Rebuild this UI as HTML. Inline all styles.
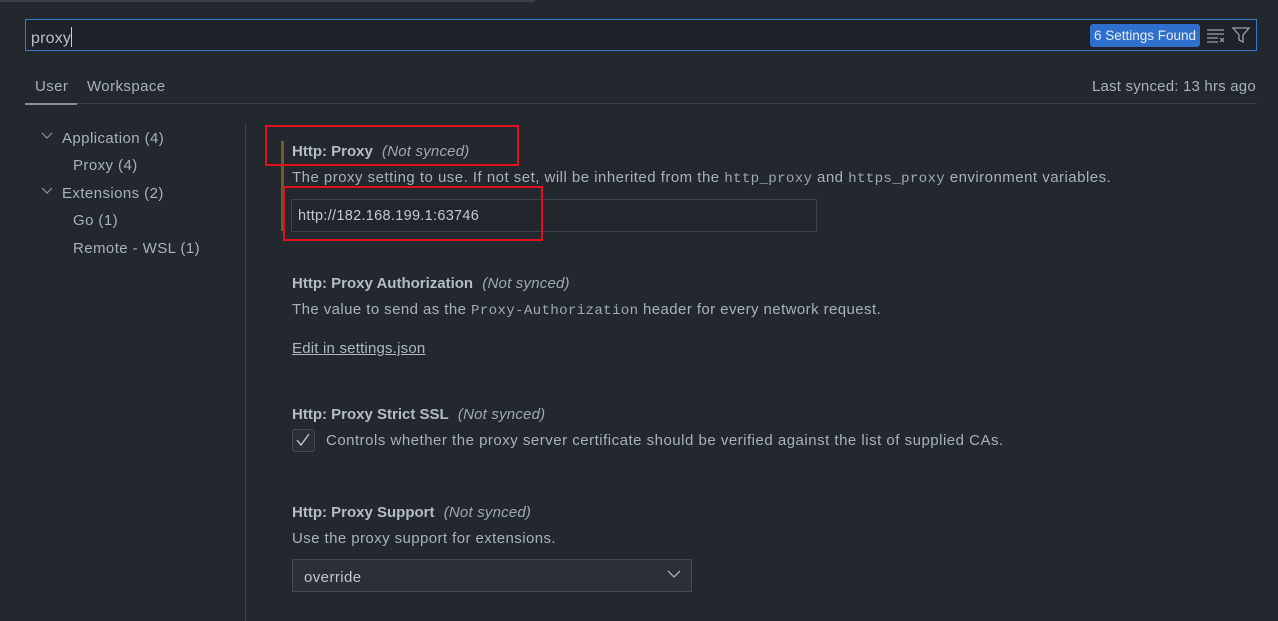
<!DOCTYPE html>
<html><head><style>
body{margin:0;width:1278px;height:621px;background:#23272e;font-family:"Liberation Sans",sans-serif;color:#a9b1bd;overflow:hidden;position:relative;font-size:15px;letter-spacing:0.42px}
.a{position:absolute;white-space:nowrap}
.mono{font-family:"Liberation Mono",monospace;font-size:14.2px;color:#a0a8b4;letter-spacing:0.3px}
b{color:#b5bcc7;letter-spacing:0}
i{color:#a0a8b4;letter-spacing:0.2px}
</style></head><body>
<div class="a" style="left:0;top:0;width:535px;height:2px;background:#3a3f47"></div>
<div class="a" style="left:25px;top:19px;width:1230px;height:30px;border:1px solid #3c78c6;background:#1f2329"></div>
<div class="a" style="left:31px;top:27px;font-size:16px;color:#b8bfca;letter-spacing:0.2px">proxy<span style="display:inline-block;width:1px;height:20px;background:#ccc;vertical-align:-4px"></span></div>
<div class="a" style="left:1090px;top:24px;width:110px;height:23px;background:#2f6fce;border-radius:3px;color:#e6ecf5;font-size:13.5px;letter-spacing:0;line-height:23px;text-align:center">6 Settings Found</div>
<svg class="a" style="left:1206px;top:27px" width="20" height="18"><g stroke="#9aa2ae" stroke-width="1.2"><line x1="1" y1="3" x2="18" y2="3"/><line x1="1" y1="7" x2="18" y2="7"/><line x1="1" y1="11" x2="12" y2="11"/><line x1="1" y1="15" x2="12" y2="15"/><line x1="14" y1="11" x2="18" y2="15"/><line x1="18" y1="11" x2="14" y2="15"/></g></svg>
<svg class="a" style="left:1232px;top:26px" width="18" height="18"><path d="M1 2H17L11 9V16L7 14V9Z" fill="none" stroke="#9aa2ae" stroke-width="1.3"/></svg>
<div class="a" style="left:35px;top:78px">User</div>
<div class="a" style="left:87px;top:78px">Workspace</div>
<div class="a" style="left:1092px;top:78px;letter-spacing:0.2px">Last synced: 13 hrs ago</div>
<div class="a" style="left:25px;top:103px;width:1232px;height:1px;background:#3d424a"></div>
<div class="a" style="left:25px;top:103px;width:52px;height:2px;background:#8a919b"></div>
<div class="a" style="left:245px;top:123px;width:1px;height:498px;background:#3a3f47"></div>
<svg class="a" style="left:40px;top:131px" width="14" height="10"><path d="M2 2L7 7L12 2" fill="none" stroke="#8c939e" stroke-width="1.2"/></svg>
<div class="a" style="left:62px;top:130px">Application (4)</div>
<div class="a" style="left:73px;top:157px">Proxy (4)</div>
<svg class="a" style="left:40px;top:186px" width="14" height="10"><path d="M2 2L7 7L12 2" fill="none" stroke="#8c939e" stroke-width="1.2"/></svg>
<div class="a" style="left:62px;top:185px">Extensions (2)</div>
<div class="a" style="left:73px;top:212px">Go (1)</div>
<div class="a" style="left:73px;top:240px">Remote - WSL (1)</div>
<div class="a" style="left:281px;top:141px;width:3px;height:90px;background:#6b5a36"></div>
<div class="a" style="left:292px;top:143px"><b>Http: Proxy</b>&nbsp; <i>(Not synced)</i></div>
<div class="a" style="left:292px;top:169px;letter-spacing:0.48px">The proxy setting to use. If not set, will be inherited from the <span class="mono">http_proxy</span> and <span class="mono">https_proxy</span> environment variables.</div>
<div class="a" style="left:291px;top:199px;width:524px;height:31px;border:1px solid #3f444c;background:#22262c"></div>
<div class="a" style="left:298px;top:208px;color:#c4cad3;font-size:14.5px;letter-spacing:0.3px">http://182.168.199.1:63746</div>
<div class="a" style="left:265px;top:125px;width:250px;height:37px;border:2px solid #e0101c"></div>
<div class="a" style="left:283px;top:186px;width:256px;height:51px;border:2px solid #e0101c"></div>
<div class="a" style="left:292px;top:275px"><b>Http: Proxy Authorization</b>&nbsp; <i>(Not synced)</i></div>
<div class="a" style="left:292px;top:301px">The value to send as the <span class="mono">Proxy-Authorization</span> header for every network request.</div>
<div class="a" style="left:292px;top:340px;text-decoration:underline;color:#b0b8c3;letter-spacing:0.2px">Edit in settings.json</div>
<div class="a" style="left:292px;top:406px"><b>Http: Proxy Strict SSL</b>&nbsp; <i>(Not synced)</i></div>
<div class="a" style="left:292px;top:429px;width:21px;height:21px;border:1px solid #454a52;border-radius:3px;background:#2a2e35"></div>
<svg class="a" style="left:294px;top:431px" width="18" height="18"><path d="M3 9L7 14L15 3" fill="none" stroke="#c0c6cf" stroke-width="1.4"/></svg>
<div class="a" style="left:326px;top:432px;letter-spacing:0.5px">Controls whether the proxy server certificate should be verified against the list of supplied CAs.</div>
<div class="a" style="left:292px;top:504px"><b>Http: Proxy Support</b>&nbsp; <i>(Not synced)</i></div>
<div class="a" style="left:292px;top:530px">Use the proxy support for extensions.</div>
<div class="a" style="left:292px;top:559px;width:398px;height:31px;border:1px solid #454a52;background:#2b3038"></div>
<div class="a" style="left:304px;top:569px;color:#c0c6cf">override</div>
<svg class="a" style="left:666px;top:569px" width="16" height="10"><path d="M2 2L8 8L14 2" fill="none" stroke="#a9b1bd" stroke-width="1.3"/></svg>
</body></html>
